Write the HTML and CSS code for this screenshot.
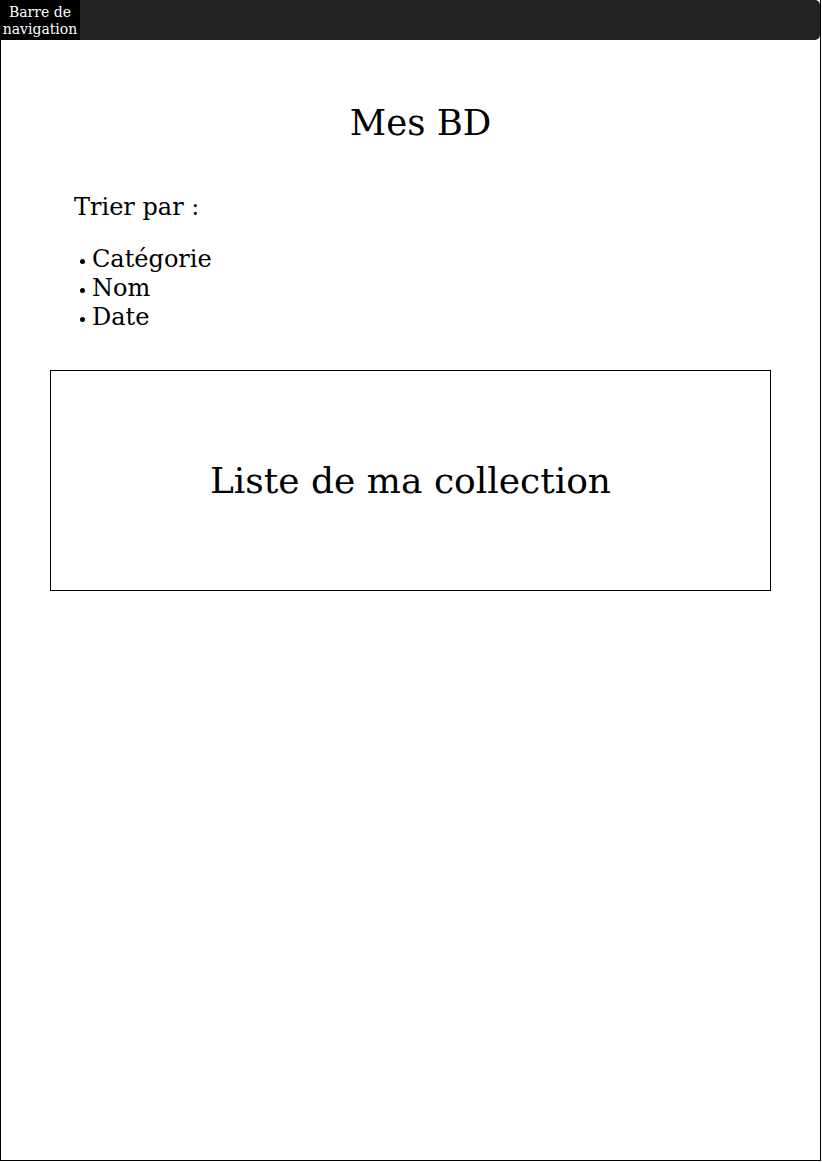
FILE: index.html
```html
<!DOCTYPE html>
<html lang="fr">
<head>
<meta charset="utf-8">
<title>Mes BD</title>
<link rel="stylesheet" href="styles.css">
</head>
<body>
<div class="frame">
  <nav class="navbar">
    <div class="nav-label">Barre de<br>navigation</div>
  </nav>
  <main class="content">
    <h1 class="title">Mes BD</h1>
    <section class="sort">
      <p class="sort-label">Trier par :</p>
      <ul class="sort-list">
        <li>Catégorie</li>
        <li>Nom</li>
        <li>Date</li>
      </ul>
    </section>
    <section class="collection">
      <h2 class="collection-title">Liste de ma collection</h2>
    </section>
  </main>
</div>
</body>
</html>
```
FILE: styles.css
```css
html, body {
  margin: 0;
  padding: 0;
  background: #fff;
}
body {
  font-family: "DejaVu Serif", serif;
  color: #000;
}
.frame {
  box-sizing: border-box;
  width: 821px;
  height: 1161px;
  border: 1px solid #000;
  border-top: none;
  display: flex;
  flex-direction: column;
}
.navbar {
  margin: 0 0 0 -1px;
  width: 820px;
  height: 40px;
  background: #222;
  border-radius: 0 5px 5px 0;
  display: flex;
  align-items: stretch;
}
.nav-label {
  width: 80px;
  padding-top: 2px;
  box-sizing: border-box;
  background: #000;
  color: #fff;
  font-size: 14px;
  line-height: 17px;
  text-align: center;
  display: flex;
  align-items: center;
  justify-content: center;
}
.content {
  display: flex;
  flex-direction: column;
  padding: 0 49px;
}
.title {
  margin: 63px 0 0;
  padding-left: 20px;
  font-size: 35.5px;
  font-weight: normal;
  text-align: center;
  line-height: 40px;
}
.sort {
  padding-left: 24px;
}
.sort-label {
  margin: 50px 0 0;
  font-size: 24px;
  line-height: 29px;
}
.sort-list {
  margin: 23px 0 0;
  padding-left: 6px;
  list-style: none;
  font-size: 24px;
  line-height: 29px;
}
.sort-list li::before {
  content: "";
  display: inline-block;
  width: 5px;
  height: 5px;
  border-radius: 50%;
  background: #000;
  vertical-align: 3px;
  margin: 0 7px 0 0;
}
.collection {
  margin-top: 38px;
  height: 221px;
  box-sizing: border-box;
  border: 1px solid #000;
  display: flex;
  align-items: center;
  justify-content: center;
}
.collection-title {
  margin: 0;
  font-size: 36px;
  font-weight: normal;
}
```
